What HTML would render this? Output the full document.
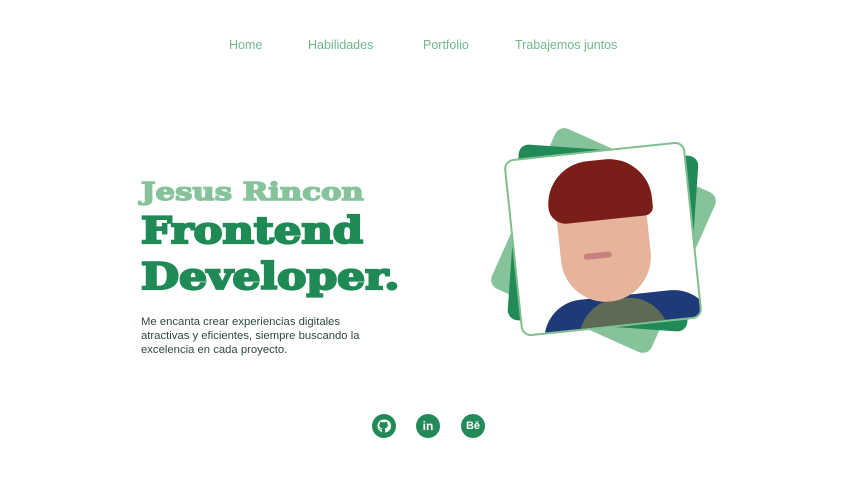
<!DOCTYPE html>
<html><head><meta charset="utf-8"><style>
*{margin:0;padding:0;box-sizing:border-box}
body{width:858px;height:481px;background:#fff;position:relative;overflow:hidden;font-family:"Liberation Sans",sans-serif}
.nav a{position:absolute;top:38px;font-size:12.5px;color:#6fb98a;text-decoration:none}
.t{position:absolute;left:141px;font-family:"DejaVu Serif",serif;font-weight:bold;white-space:nowrap;transform-origin:left}
p{position:absolute;left:141px;top:315px;width:250px;font-size:11.3px;line-height:14px;color:#2f4a3a}
.sq{position:absolute;border-radius:10px}
.ic{position:absolute;top:414px;width:24px;height:24px;border-radius:50%;background:#218a57;color:#fff;font-weight:bold;font-size:12px;text-align:center;line-height:24px}
</style></head><body>
<div class="nav"><a style="left:229px">Home</a><a style="left:308px">Habilidades</a><a style="left:423px">Portfolio</a><a style="left:515px">Trabajemos juntos</a></div>
<div class="t" style="top:177px;font-size:24px;color:#86c39a;-webkit-text-stroke:1.4px #86c39a;transform:scaleX(1.28)">Jesus Rincon</div>
<div class="t" style="top:210px;font-size:36px;color:#1f8a55;-webkit-text-stroke:2.2px #1f8a55;transform:scaleX(1.2)">Frontend</div>
<div class="t" style="top:256px;font-size:36px;color:#1f8a55;-webkit-text-stroke:2.2px #1f8a55;transform:scaleX(1.22)">Developer.</div>
<p>Me encanta crear experiencias digitales atractivas y eficientes, siempre buscando la excelencia en cada proyecto.</p>
<div class="sq" style="left:516px;top:153px;width:175px;height:175px;background:#86c39a;transform:rotate(24deg)"></div>
<div class="sq" style="left:513px;top:150px;width:180px;height:176px;background:#218a57;transform:rotate(4deg)"></div>
<div class="sq" style="left:512px;top:150px;width:182px;height:178px;background:#fff;border:2px solid #7fc090;transform:rotate(-6deg);overflow:hidden">
 <div style="position:absolute;left:20px;top:145px;width:170px;height:60px;background:#1e3a78;border-radius:40px 40px 0 0"></div>
 <div style="position:absolute;left:55px;top:148px;width:90px;height:40px;background:#5d6a55;border-radius:40px 40px 0 0"></div>
 <div style="position:absolute;left:45px;top:25px;width:90px;height:125px;background:#e6b39b;border-radius:45px 45px 50px 50px"></div>
 <div style="position:absolute;left:38px;top:8px;width:104px;height:60px;background:#7a1e1a;border-radius:50px 50px 10px 20px"></div>
 <div style="position:absolute;left:68px;top:100px;width:28px;height:6px;background:#c97f7f;border-radius:3px"></div>
</div>
<div class="ic" style="left:372px"><svg width="24" height="24" viewBox="0 0 24 24"><path fill="#fff" d="M12 5.5a6.5 6.5 0 0 0-2 12.7v-2.1c-1.8.4-2.2-.8-2.2-.8-.3-.7-.7-.9-.7-.9-.6-.4 0-.4 0-.4.6 0 1 .7 1 .7.6 1 1.6.7 1.9.5 0-.4.2-.7.4-.9-1.4-.2-3-.7-3-3.2 0-.7.3-1.3.7-1.7-.1-.2-.3-.8.1-1.7 0 0 .5-.2 1.8.7a6 6 0 0 1 3.2 0c1.3-.9 1.8-.7 1.8-.7.4.9.1 1.5.1 1.7.4.4.7 1 .7 1.7 0 2.5-1.6 3-3 3.2.2.2.4.6.4 1.2v3A6.5 6.5 0 0 0 12 5.5z"/></svg></div>
<div class="ic" style="left:416px">in</div>
<div class="ic" style="left:461px;font-size:11px">Bē</div>
</body></html>
